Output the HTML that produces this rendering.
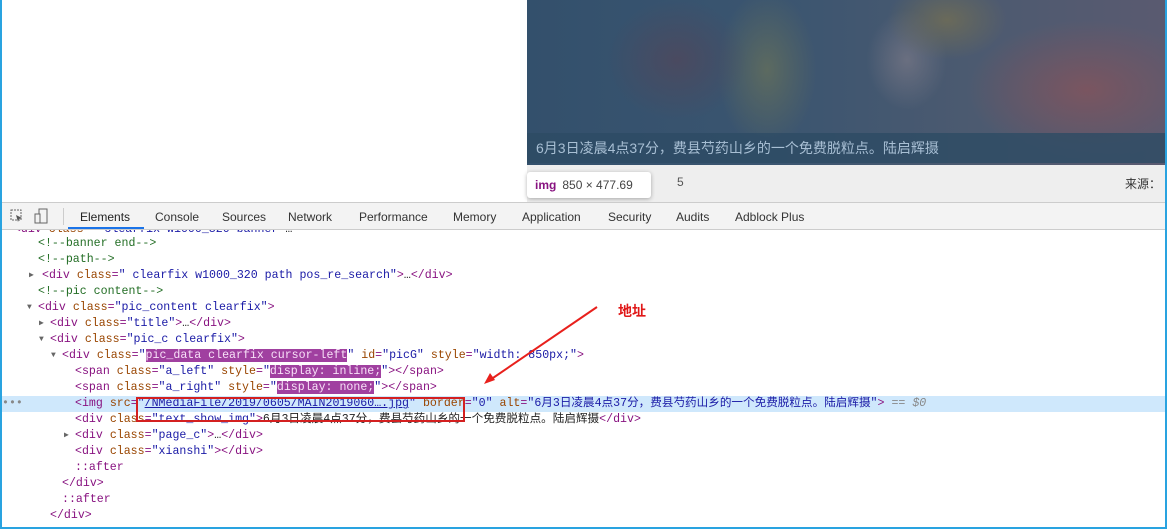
<!DOCTYPE html>
<html><head><meta charset="utf-8"><style>
*{margin:0;padding:0;box-sizing:border-box}
body{width:1167px;height:529px;overflow:hidden;background:#fff;position:relative;font-family:"Liberation Sans","Noto Sans CJK SC",sans-serif}
.img{position:absolute;left:527px;top:0;width:640px;height:165px;background:
radial-gradient(ellipse 60px 40px at 420px 20px,#6a6a5a,transparent),
radial-gradient(ellipse 120px 70px at 560px 90px,#7a5560,transparent),
radial-gradient(ellipse 70px 60px at 150px 60px,#4a4a60,transparent),
radial-gradient(ellipse 50px 80px at 240px 70px,#5c6a60,transparent),
radial-gradient(ellipse 40px 50px at 380px 60px,#6a6f80,transparent),
linear-gradient(90deg,#33506c,#3b5570 40%,#4c5a70 70%,#5a5a70);}
.cap{position:absolute;left:527px;top:133px;width:640px;height:30px;background:rgba(45,75,100,.8);color:#a8bfd4;font-size:14px;line-height:30px;padding-left:9px}
.bar{position:absolute;left:527px;top:165px;width:640px;height:37px;background:#eeeeee;font-size:12px;color:#333}
.tip{position:absolute;left:527px;top:172px;width:124px;height:26px;background:#fff;border-radius:3px;box-shadow:0 1px 4px rgba(0,0,0,.3);font-size:12px;line-height:26px;padding-left:8px;color:#444}
.tip b{color:#881280;margin-right:6px}
.tabs{position:absolute;left:0;top:202px;width:1167px;height:28px;background:#f3f3f3;border-top:1px solid #ccc;border-bottom:1px solid #ccc;font-size:12px;color:#333}
.tabs span{position:absolute;top:7px}
.code{position:absolute;left:0;top:230px;width:1167px;font-family:"Liberation Mono","DejaVu Sans Mono","Noto Sans CJK SC",monospace;font-size:11.6px;color:#222}
.l{height:16px;line-height:16px;white-space:pre;position:relative}
.t{color:#881280}.a{color:#994500}.v{color:#1a1aa6}.c{color:#236e25}.g{color:#888}
.hl{background:#cfe8fc}
.mk{background:#a040a0;color:#f8e0f8}
.ar{position:absolute;color:#666;font-size:8px}
</style></head><body>
<div class="img"></div>
<div class="cap">6月3日凌晨4点37分，费县芍药山乡的一个免费脱粒点。陆启辉摄</div>
<div class="bar"><span style="position:absolute;left:150px;top:10px;color:#555">5</span><span style="position:absolute;left:598px;top:10px">来源：</span></div>
<div class="tip"><b>img</b>850 × 477.69</div>
<div class="tabs">
<svg style="position:absolute;left:10px;top:6px" width="14" height="14"><rect x="1" y="1" width="10" height="10" fill="none" stroke="#666" stroke-dasharray="2 1"/><path d="M6 6l6 3-3 1-1 3z" fill="#555"/></svg>
<svg style="position:absolute;left:34px;top:5px" width="16" height="16"><rect x="5" y="1" width="8" height="14" fill="none" stroke="#666"/><rect x="1" y="6" width="5" height="9" fill="#f3f3f3" stroke="#666"/></svg>
<div style="position:absolute;left:63px;top:5px;width:1px;height:17px;background:#ccc"></div>
<span style="left:80px;color:#222">Elements</span><div style="position:absolute;left:68px;top:24px;width:76px;height:2px;background:#1a73e8"></div>
<span style="left:155px">Console</span><span style="left:222px">Sources</span><span style="left:288px">Network</span><span style="left:359px">Performance</span><span style="left:453px">Memory</span><span style="left:522px">Application</span><span style="left:608px">Security</span><span style="left:676px">Audits</span><span style="left:735px">Adblock Plus</span>
</div>
<div class="code">
<div class="l" style="height:6px;overflow:hidden;line-height:0px">  <span class="t">&lt;div</span> <span class="a">class</span>=<span class="v">" clearfix w1000_320 banner"</span>…</div>
<div class="l" style="padding-left:38px"><span class="c">&lt;!--banner end--&gt;</span></div>
<div class="l" style="padding-left:38px"><span class="c">&lt;!--path--&gt;</span></div>
<div class="l" style="padding-left:42px"><span class="ar" style="left:29px">▶</span><span class="t">&lt;div</span> <span class="a">class</span><span class="t">=</span><span class="v">" clearfix w1000_320 path pos_re_search"</span><span class="t">&gt;</span>…<span class="t">&lt;/div&gt;</span></div>
<div class="l" style="padding-left:38px"><span class="c">&lt;!--pic content--&gt;</span></div>
<div class="l" style="padding-left:38px"><span class="ar" style="left:27px">▼</span><span class="t">&lt;div</span> <span class="a">class</span><span class="t">=</span><span class="v">"pic_content clearfix"</span><span class="t">&gt;</span></div>
<div class="l" style="padding-left:50px"><span class="ar" style="left:39px">▶</span><span class="t">&lt;div</span> <span class="a">class</span><span class="t">=</span><span class="v">"title"</span><span class="t">&gt;</span>…<span class="t">&lt;/div&gt;</span></div>
<div class="l" style="padding-left:50px"><span class="ar" style="left:39px">▼</span><span class="t">&lt;div</span> <span class="a">class</span><span class="t">=</span><span class="v">"pic_c clearfix"</span><span class="t">&gt;</span></div>
<div class="l" style="padding-left:62px"><span class="ar" style="left:51px">▼</span><span class="t">&lt;div</span> <span class="a">class</span><span class="t">=</span><span class="v">"<span class="mk">pic_data clearfix cursor-left</span>"</span> <span class="a">id</span><span class="t">=</span><span class="v">"picG"</span> <span class="a">style</span><span class="t">=</span><span class="v">"width: 850px;"</span><span class="t">&gt;</span></div>
<div class="l" style="padding-left:75px"><span class="t">&lt;span</span> <span class="a">class</span><span class="t">=</span><span class="v">"a_left"</span> <span class="a">style</span><span class="t">=</span><span class="v">"<span class="mk">display: inline;</span>"</span><span class="t">&gt;&lt;/span&gt;</span></div>
<div class="l" style="padding-left:75px"><span class="t">&lt;span</span> <span class="a">class</span><span class="t">=</span><span class="v">"a_right"</span> <span class="a">style</span><span class="t">=</span><span class="v">"<span class="mk">display: none;</span>"</span><span class="t">&gt;&lt;/span&gt;</span></div>
<div class="l hl" style="padding-left:75px"><span class="g" style="position:absolute;left:2px">•••</span><span class="t">&lt;img</span> <span class="a">src</span><span class="t">=</span><span class="v">"<u>/NMediaFile/2019/0605/MAIN2019060….jpg</u>"</span> <span class="a">border</span><span class="t">=</span><span class="v">"0"</span> <span class="a">alt</span><span class="t">=</span><span class="v">"6月3日凌晨4点37分，费县芍药山乡的一个免费脱粒点。陆启辉摄"</span><span class="t">&gt;</span> <span class="g"><i>== $0</i></span></div>
<div class="l" style="padding-left:75px"><span class="t">&lt;div</span> <span class="a">class</span><span class="t">=</span><span class="v">"text_show_img"</span><span class="t">&gt;</span>6月3日凌晨4点37分，费县芍药山乡的一个免费脱粒点。陆启辉摄<span class="t">&lt;/div&gt;</span></div>
<div class="l" style="padding-left:75px"><span class="ar" style="left:64px">▶</span><span class="t">&lt;div</span> <span class="a">class</span><span class="t">=</span><span class="v">"page_c"</span><span class="t">&gt;</span>…<span class="t">&lt;/div&gt;</span></div>
<div class="l" style="padding-left:75px"><span class="t">&lt;div</span> <span class="a">class</span><span class="t">=</span><span class="v">"xianshi"</span><span class="t">&gt;&lt;/div&gt;</span></div>
<div class="l" style="padding-left:75px"><span class="t">::after</span></div>
<div class="l" style="padding-left:62px"><span class="t">&lt;/div&gt;</span></div>
<div class="l" style="padding-left:62px"><span class="t">::after</span></div>
<div class="l" style="padding-left:50px"><span class="t">&lt;/div&gt;</span></div>
</div>
<div style="position:absolute;left:136px;top:397px;width:329px;height:25px;border:2px solid #d42020"></div>
<svg style="position:absolute;left:0;top:0" width="1167" height="529"><line x1="597" y1="307" x2="490" y2="380" stroke="#e8201c" stroke-width="2"/><path d="M484 384l6-11 5 7z" fill="#e8201c"/></svg>
<div style="position:absolute;left:618px;top:301px;color:#e01818;font-size:14px;font-weight:bold">地址</div>
<div style="position:absolute;left:0;top:0;width:2px;height:529px;background:#29a3e0"></div>
<div style="position:absolute;left:1165px;top:0;width:2px;height:529px;background:#29a3e0"></div>
<div style="position:absolute;left:0;top:527px;width:1167px;height:2px;background:#29a3e0"></div>
</body></html>
